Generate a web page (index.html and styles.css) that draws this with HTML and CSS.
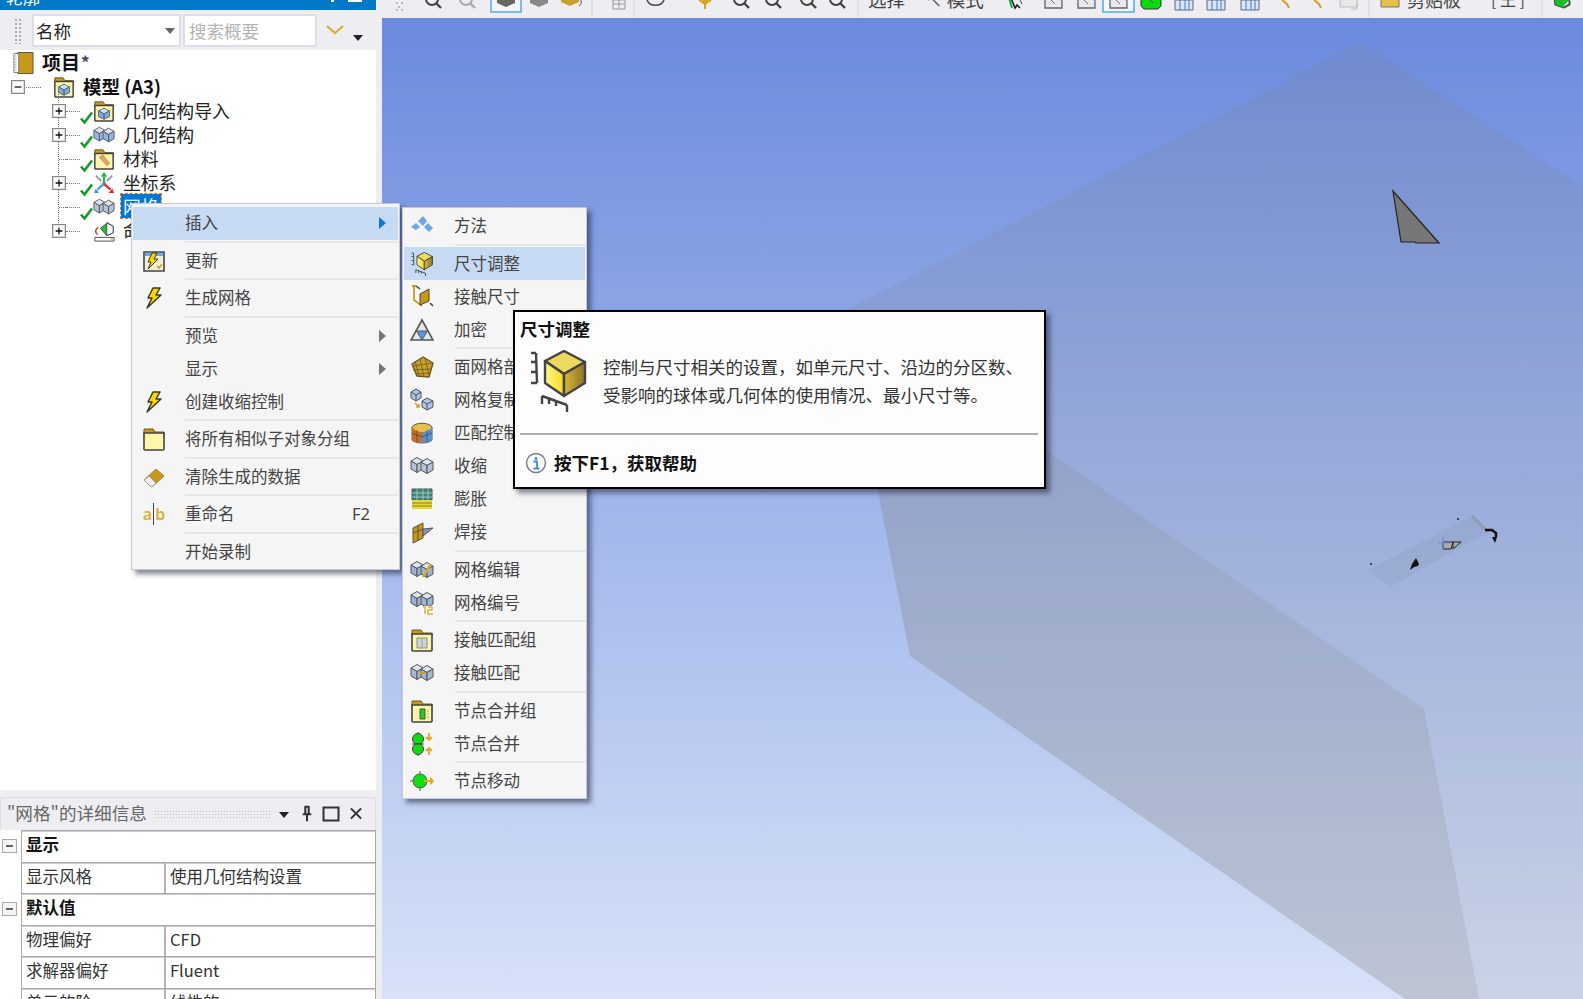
FILE: index.html
```html
<!DOCTYPE html>
<html lang="zh">
<head>
<meta charset="utf-8">
<title>Mechanical</title>
<link rel="stylesheet" href="styles.css">
</head>
<body>
<svg class="sprite" xmlns="http://www.w3.org/2000/svg">
  <defs>
    <linearGradient id="yl" x1="0" x2="1" y1="0" y2="0"><stop offset="0" stop-color="#fff48a"/><stop offset="1" stop-color="#f4dc20"/></linearGradient>
    <linearGradient id="gd" x1="0" x2="1" y1="0" y2="0"><stop offset="0" stop-color="#d8b83c"/><stop offset="1" stop-color="#8c7428"/></linearGradient>
    <symbol id="chk" viewBox="0 0 13 13"><path d="M1 7.500 4.500 11.500 12 1.500" fill="none" stroke="#159a2c" stroke-width="2.600"/></symbol>
    <symbol id="brick" viewBox="0 0 24 24"><g stroke="#555" stroke-width="1" stroke-linejoin="round"><path d="M1 7 7 3.500 13 7 7 10.500z" fill="#dbe4f0"/><path d="M1 7l6 3.500v8L1 15z" fill="currentColor"/><path d="M13 7l-6 3.500v8l6-3.500z" fill="currentColor"/><path d="M11 8l6-3.500L23 8l-6 3.500z" fill="#dbe4f0"/><path d="M11 8l6 3.500v8L11 16z" fill="currentColor"/><path d="M23 8l-6 3.500v8l6-3.500z" fill="currentColor"/></g></symbol>
    <symbol id="folder" viewBox="0 0 24 24"><path d="M2 2h9l2 3h9v4H2z" fill="#c8981a" stroke="#6a5a20"/><path d="M2 6h20v16a1 1 0 0 1-1 1H3a1 1 0 0 1-1-1z" fill="#fdf6a8" stroke="#444" stroke-width="1.600"/></symbol>
    <symbol id="foldercube" viewBox="0 0 24 24"><use href="#folder" width="24" height="24"/><path d="M6 12l6-3 6 3-6 3z" fill="#cfe0f5" stroke="#567"/><path d="M6 12l6 3v6l-6-3zM18 12l-6 3v6l6-3z" fill="#7ea8e0" stroke="#567"/></symbol>
    <symbol id="foldermat" viewBox="0 0 24 24"><use href="#folder" width="24" height="24"/><path d="M7 10l8 9 3-2-7-9z" fill="#e0a870" stroke="#a07850" stroke-width=".8"/></symbol>
    <symbol id="coord" viewBox="0 0 24 24"><circle cx="12" cy="13" r="2.500" fill="#999"/><path d="M12 12V3" stroke="#1ec03c" stroke-width="2.400"/><path d="M12 0l3.500 5h-7z" fill="#1ec03c"/><path d="M12 13l7 6" stroke="#e22" stroke-width="2.400"/><path d="M23 23l-6 0 4-5z" fill="#e22"/><path d="M12 13l-7 6" stroke="#4a9ae8" stroke-width="2.400"/><path d="M1 23l6 0-4-5z" fill="#4a9ae8"/><path d="M3 4l6 6M21 4l-6 6" stroke="#8a94a8" stroke-width="1.800"/></symbol>
    <symbol id="named" viewBox="0 0 24 24"><path d="M8 9l8-6 6 4v7l-7 3z" fill="#26c02c" stroke="#444"/><path d="M15 3l7 4v7l-7 3z" fill="#fff" stroke="#444"/><path d="M2 19h21v4H2z" fill="#fff" stroke="#444"/><path d="M6 8C2 10 2 14 5 16" fill="none" stroke="#e03020" stroke-width="1.600"/><path d="M19 20h3v2h-3z" fill="#e8c060"/></symbol>
    <symbol id="project" viewBox="0 0 22 24"><path d="M5 1h16v22H5z" fill="#c8981a" stroke="#554"/><path d="M1 2h5v20H1z" fill="#fff" stroke="#777"/><path d="M3 4v16" stroke="#999" stroke-dasharray="1.500 1.500"/></symbol>
    <symbol id="bolt" viewBox="0 0 24 24"><path d="M11 2 6 12h4L5 22 19 9h-5l4-7z" fill="#f7d800" stroke="#3a3a2a" stroke-width="1.500" stroke-linejoin="round"/></symbol>
    <symbol id="update" viewBox="0 0 24 24"><path d="M2 3h20v19H2z" fill="#f4f0d8" stroke="#444" stroke-width="1.600"/><path d="M3 4h18v3H3z" fill="#6aa8e8"/><path d="M10 4 6 13h3L6 20l10-10h-4l3-6z" fill="#f7d800" stroke="#3a3a2a"/><path d="M15 17l2 2 3-4" fill="none" stroke="#c8a030" stroke-width="1.500"/></symbol>
    <symbol id="eraser" viewBox="0 0 24 24"><path d="M2 15 14 4l8 7-12 11z" fill="#c8981a" stroke="#a88428"/><path d="M2 15l5 5 3 2 4-4-7-7z" fill="#eee" stroke="#999"/></symbol>
    <symbol id="method" viewBox="0 0 24 24"><g fill="#6aa8ea"><path d="M1 13l5-4 4 4-4 3zM8 7l5-5 4 5-4 5zM14 13l4-4 5 5-4 4z"/></g></symbol>
    <symbol id="sizing" viewBox="0 0 60 62"><path d="M3 3h5M8 3l1 30M3 12h5M3 22h6M3 33h6" fill="none" stroke="#444" stroke-width="2.400"/><path d="M14 46l25 9M14 46v8M21 49v5M28 51v5M39 55v7" fill="none" stroke="#444" stroke-width="2.400"/><path d="M17 11 36 1l21 11-21 12z" fill="#ecd95e" stroke="#444" stroke-width="2.400" stroke-linejoin="round"/><path d="M17 11l19 13v22l-19-13z" fill="url(#yl)" stroke="#444" stroke-width="2.400" stroke-linejoin="round"/><path d="M57 12 36 24v22l21-13z" fill="url(#gd)" stroke="#444" stroke-width="2.400" stroke-linejoin="round"/></symbol>
    <symbol id="contact" viewBox="0 0 24 24"><path d="M2 1h4M4 1v14l8 6" fill="none" stroke="#c8a020" stroke-width="1.800"/><path d="M10 9l9-5v12l-9 4z" fill="#c8981a" stroke="#444"/><path d="M6 1l4 3M20 18l3 3" stroke="#444" stroke-width="1.500"/></symbol>
    <symbol id="refine" viewBox="0 0 24 24"><path d="M12 2 23 22H1z" fill="#dfe6ef" stroke="#555" stroke-width="1.600"/><path d="M6.500 13h11L12 22z" fill="#5a94e0" stroke="#555"/></symbol>
    <symbol id="facemesh" viewBox="0 0 24 24"><path d="M2 9 13 2l10 6-4 14-12-1z" fill="#c8a028" stroke="#6a5a20" stroke-width="1.400"/><path d="M5 6l4 15M10 4l4 18M15 3l4 17M2 11l21-3M3 15l18-1M5 19l15-1" stroke="#6a5a20" stroke-width=".8" fill="none"/></symbol>
    <symbol id="meshcopy" viewBox="0 0 24 24"><g stroke="#555" fill="#a9c4e6"><path d="M1 4l5-3 5 3v6l-5 3-5-3z"/><path d="M12 13l5-3 6 3v6l-6 3-5-3z"/></g><path d="M1 4l5 3 5-3M6 7v6M12 13l5 3 6-3M17 16v6" fill="none" stroke="#555"/><path d="M5 15l4 4m0-3v3H6" fill="none" stroke="#e0a020" stroke-width="1.500"/></symbol>
    <symbol id="match" viewBox="0 0 24 24"><path d="M2 6C5 1 19 1 22 6v13c-3 4-17 4-20 0z" fill="#e8c048" stroke="#555"/><path d="M2 6c3 4 8 5 10 5V22c-4 0-8-1-10-3z" fill="#c87028"/><path d="M12 11c3 0 7-1 10-5v13c-2 2-6 3-10 3z" fill="#5a90d0"/><path d="M7 9v12M17 9v12M2 12l10 4 10-4" stroke="#444" stroke-width=".7" fill="none"/></symbol>
    <symbol id="inflate" viewBox="0 0 24 24"><path d="M2 2h20v11H2z" fill="#3a8a70" stroke="#456"/><path d="M2 6h20M2 10h20M7 2v11M13 2v11M18 2v11" stroke="#bcd" stroke-width=".8"/><path d="M2 13h20v9H2z" fill="#e8d838"/><path d="M2 16h20M2 19h20" stroke="#8a8020" stroke-width="1.200"/></symbol>
    <symbol id="weld" viewBox="0 0 24 24"><path d="M3 8l10-5v15L3 23z" fill="#c8981a" stroke="#554"/><path d="M8 6v15M3 13l10-4" stroke="#554"/><path d="M13 9l10-1-10 8z" fill="#8a94a8" stroke="#556"/></symbol>
    <symbol id="meshedit" viewBox="0 0 24 24"><use href="#brick" width="24" height="24" color="#9cb4d4"/><path d="M13 19l8-13" stroke="#d8a828" stroke-width="2.400"/></symbol>
    <symbol id="meshnum" viewBox="0 0 24 24"><use href="#brick" width="24" height="24" y="-3" color="#9cb4d4"/><path d="M11 15h13v9H11z" fill="#fff"/><path d="M13 16h2v7M18 16h4v3h-4v4h5" fill="none" stroke="#e0b030" stroke-width="1.500"/></symbol>
    <symbol id="cgroup" viewBox="0 0 24 24"><use href="#folder" width="24" height="24"/><path d="M7 10h10v10H7z" fill="#c8d4e4" stroke="#889"/><path d="M12 10v10" stroke="#c8a030"/></symbol>
    <symbol id="cmatch" viewBox="0 0 24 24"><use href="#brick" width="24" height="24" color="#a8b8cc"/><path d="M9 12h6" stroke="#c8a030" stroke-width="2"/></symbol>
    <symbol id="ngroup" viewBox="0 0 24 24"><use href="#folder" width="24" height="24"/><path d="M10 10h5v10h-5z" fill="#22cc22" stroke="#454"/><path d="M18 11v8" stroke="#c8a030" stroke-dasharray="2 1"/></symbol>
    <symbol id="nmerge" viewBox="0 0 24 24"><circle cx="8" cy="7" r="5.500" fill="#14d814" stroke="#444"/><circle cx="8" cy="17" r="5.500" fill="#14d814" stroke="#444"/><path d="M8 0v2M8 22v2M2 12h12" stroke="#444"/><path d="M19 1v6m-3-2 3 3 3-3M19 23v-6m-3 2 3-3 3 3" fill="none" stroke="#e0a820" stroke-width="1.800"/></symbol>
    <symbol id="nmove" viewBox="0 0 24 24"><circle cx="10" cy="12" r="7" fill="#10e010" stroke="#555"/><path d="M10 2v3M10 19v3M0 12h3" stroke="#555"/><path d="M14 12h9m-3-3 3 3-3 3" fill="none" stroke="#e0a820" stroke-width="1.800"/></symbol>
    <symbol id="plus" viewBox="0 0 14 14"><path d="M3 7h8M7 3v8" stroke="#111" stroke-width="1.500"/></symbol>
    <symbol id="minus" viewBox="0 0 14 14"><path d="M3 7h8" stroke="#111" stroke-width="1.500"/></symbol>
    <g id="mag"><circle cx="0" cy="0" r="6" fill="none" stroke="currentColor" stroke-width="2"/><path d="M4 4l5 5" stroke="currentColor" stroke-width="2.400"/></g>
    <g id="tcube"><path d="M-9 -3 0 -7 9 -3 9 4 0 8 -9 4z" fill="currentColor"/></g>
    <g id="tbox"><path d="M-8 -2h15l2 3v7H-8z" fill="#e8e8ee" stroke="#666" stroke-width="1.300"/><path d="M-2 0l4 4" stroke="#777"/></g>
    <g id="tgrid"><path d="M-9 0h18v10H-9z" fill="#dbe6f4" stroke="#667"/><path d="M-4 0v10M1 0v10M5 0v10" stroke="#3a7ad0"/></g>
  </defs>
</svg>

<div class="app">
  <aside class="left">
    <div class="titlebar">
      <span class="title-text">轮廓</span>
      <span class="title-btns"><i class="tb-pin"></i><i class="tb-box"></i></span>
    </div>
    <div class="searchbar">
      <span class="gripper"></span>
      <div class="combo"><span>名称</span><i class="tri"></i></div>
      <div class="search">搜索概要</div>
      <svg class="chev" viewBox="0 0 18 10"><path d="M1 1l8 7 8-7" fill="none" stroke="#d8ae30" stroke-width="2.200"/></svg>
      <i class="tri black"></i>
    </div>

    <div class="tree">
      <div class="row root"><svg class="ic-project"><use href="#project"/></svg><b class="rootname">项目</b><span class="star">*</span></div>
      <div class="row model">
        <span class="exp"><svg><use href="#minus"/></svg></span><span class="dots wide"></span>
        <svg class="ic-model"><use href="#foldercube"/></svg><b class="modelname">模型 (A3)</b>
      </div>
      <div class="children">
        <div class="row"><span class="exp"><svg><use href="#plus"/></svg></span><span class="dots"></span><svg class="chk"><use href="#chk"/></svg><svg class="ic"><use href="#foldercube"/></svg><span class="lbl">几何结构导入</span></div>
        <div class="row"><span class="exp"><svg><use href="#plus"/></svg></span><span class="dots"></span><svg class="chk"><use href="#chk"/></svg><svg class="ic blue"><use href="#brick"/></svg><span class="lbl">几何结构</span></div>
        <div class="row"><span class="exp none"></span><span class="dots"></span><svg class="chk"><use href="#chk"/></svg><svg class="ic"><use href="#foldermat"/></svg><span class="lbl">材料</span></div>
        <div class="row"><span class="exp"><svg><use href="#plus"/></svg></span><span class="dots"></span><svg class="chk"><use href="#chk"/></svg><svg class="ic"><use href="#coord"/></svg><span class="lbl">坐标系</span></div>
        <div class="row"><span class="exp none"></span><span class="dots"></span><svg class="chk"><use href="#chk"/></svg><svg class="ic grey"><use href="#brick"/></svg><span class="lbl selected">网格</span></div>
        <div class="row"><span class="exp"><svg><use href="#plus"/></svg></span><span class="dots"></span><span class="nochk"></span><svg class="ic"><use href="#named"/></svg><span class="lbl">命名选择</span></div>
      </div>
    </div>

    <div class="details">
      <div class="details-head">
        <span class="details-title">"网格"的详细信息</span>
        <span class="details-grip"></span>
        <i class="tri black"></i>
        <svg class="dbtn pin" viewBox="0 0 14 20"><path d="M4 2h6M5 2v9M9 2v9M2 11h10M7 11v8" fill="none" stroke="#333" stroke-width="2.400"/></svg>
        <svg class="dbtn wide" viewBox="0 0 18 16"><path d="M1.500 2h15v13h-15z" fill="none" stroke="#333" stroke-width="2"/></svg>
        <svg class="dbtn close" viewBox="0 0 14 14"><path d="M1 1l12 12M13 1 1 13" stroke="#333" stroke-width="2.400"/></svg>
      </div>
      <div class="dgroup">
        <span class="collapse"><svg><use href="#minus"/></svg></span>
        <div class="drow head">显示</div>
      </div>
      <div class="dgroup">
        <span class="gutter"></span>
        <div class="drow"><span class="k">显示风格</span><span class="v">使用几何结构设置</span></div>
      </div>
      <div class="dgroup">
        <span class="collapse"><svg><use href="#minus"/></svg></span>
        <div class="drow head">默认值</div>
      </div>
      <div class="dgroup">
        <span class="gutter"></span>
        <div class="drow"><span class="k">物理偏好</span><span class="v">CFD</span></div>
      </div>
      <div class="dgroup">
        <span class="gutter"></span>
        <div class="drow"><span class="k">求解器偏好</span><span class="v">Fluent</span></div>
      </div>
      <div class="dgroup">
        <span class="gutter"></span>
        <div class="drow"><span class="k">单元的阶</span><span class="v">线性的</span></div>
      </div>
    </div>
  </aside>

  <main class="right">
    <div class="toolbar">
      <svg class="strip-a" viewBox="0 0 476 18">
        <g fill="#aaa"><circle cx="15" cy="3" r="1"/><circle cx="20" cy="3" r="1"/><circle cx="17" cy="7" r="1"/><circle cx="15" cy="10" r="1"/><circle cx="20" cy="10" r="1"/></g>
        <use href="#mag" x="50" y="-1" color="#444"/>
        <use href="#mag" x="84" y="-1" color="#aaa"/>
        <path d="M109 -2h30v14h-30z" fill="#f2f6fb" stroke="#55aaee" stroke-width="1.500"/>
        <use href="#tcube" x="124" y="-1" color="#666"/>
        <use href="#tcube" x="157" y="-1" color="#888"/>
        <use href="#tcube" x="188" y="-2" color="#c8a028"/>
        <path d="M199 0a5 5 0 0 1-2 6" fill="none" stroke="#555"/>
        <path d="M210 0v17M252 0v17M476 0v17" stroke="#d0d0d8"/>
        <path d="M231 0h12v9h-12zM231 4h12M237 0v9" fill="none" stroke="#999"/>
        <path d="M265 0a9 8 0 0 0 17 0" fill="none" stroke="#444" stroke-width="1.500"/>
        <path d="M317 0l6 4 6-4M323 3v6" fill="none" stroke="#d8a020" stroke-width="2"/><circle cx="323" cy="0" r="3" fill="#d8a020"/>
        <use href="#mag" x="358" y="-1" color="#444"/>
        <use href="#mag" x="390" y="-1" color="#444"/>
        <use href="#mag" x="425" y="-1" color="#444"/>
        <use href="#mag" x="454" y="-1" color="#444"/>
      </svg>
      <span class="tb-text first">选择</span>
      <span class="tb-text arrow">↖ 模式</span>
      <svg class="strip-b" viewBox="0 0 395 18">
        <path d="M6 -2l4 10 2-3 3 3" fill="none" stroke="#222" stroke-width="1.600"/><path d="M4 -2l3 10" stroke="#12b030" stroke-width="2"/><path d="M15 0l2 4" stroke="#444"/>
        <use href="#tbox" x="48"/>
        <use href="#tbox" x="81"/>
        <path d="M98 -2h31v14H98z" fill="#f2f6fb" stroke="#55aaee" stroke-width="1.500"/>
        <use href="#tbox" x="113"/>
        <path d="M136 -2h20v8l-3 3h-14l-3-3z" fill="#10d810" stroke="#333"/><path d="M145 0l3 3" stroke="#063"/>
        <use href="#tgrid" x="179"/>
        <use href="#tgrid" x="211"/>
        <use href="#tgrid" x="245"/>
        <path d="M277 0l5 4 2 4" fill="none" stroke="#d8a020" stroke-width="2"/>
        <path d="M309 0l5 4 2 4" fill="none" stroke="#d8a020" stroke-width="2"/>
        <path d="M335 -2h17v9h-17z" fill="#e8e8ea" stroke="#bbb"/><path d="M352 3v6h-6" fill="none" stroke="#bbb"/>
        <path d="M364 0v17" stroke="#d0d0d8"/>
        <path d="M376 -2h18v9h-18z" fill="#e8c048" stroke="#777"/>
      </svg>
      <span class="tb-text clip">剪贴板</span>
      <span class="tb-text bracket">[ 王 ]</span>
      <svg class="strip-c" viewBox="0 0 40 18">
        <path d="M1 0v17" stroke="#d0d0d8"/>
        <path d="M13 -2h12l4 3v4l-6 3-9-3z" fill="#18c028" stroke="#444"/><path d="M21 8l7-4V0" fill="#fff" stroke="#444"/>
      </svg>
    </div>
    <div class="viewport">
      <svg class="scene" viewBox="0 0 1201 981">
        <path d="M979 24 1201 169V981H1097L1042 691 461 294z" fill="#808080" fill-opacity=".15"/>
        <path d="M461 294 1042 691 1097 981H1023L528 638z" fill="#808080" fill-opacity=".3"/>
        <path d="M1011 173 1057 225 1034 225 1033 224H1019z" fill="#777" stroke="#222" stroke-width="1.200"/>
        <path d="M1090 498 1106 514 1008 569 986 552z" fill="#7f8ca8" fill-opacity=".17"/>
        <path d="M1090 498 1106 514" stroke="#8f9cb8" stroke-width="3"/>
        <circle cx="1076" cy="501" r="1" fill="#222"/><circle cx="989" cy="546" r="1" fill="#222"/>
        <path d="M1034 540l3 6-1 2-4 1-4 3 2-6z" fill="#111"/>
        <path d="M1061 524h10l-2 7h-8zM1071 524h8l-8 7z" fill="#aaa" stroke="#222"/>
        <path d="M1056 525h12M1061 519v12" stroke="#6a8ae0"/>
        <path d="M1103 512h7l4 3v4" fill="none" stroke="#111" stroke-width="2.500"/><path d="M1110 519h5l-2 6z" fill="#111"/>
      </svg>
    </div>
  </main>
</div>

<div class="menu menu-main">
  <div class="item active"><span class="slot"></span><span class="txt">插入</span><i class="sub blue"></i></div>
  <div class="sep"></div>
  <div class="item"><svg class="slot"><use href="#update"/></svg><span class="txt">更新</span></div>
  <div class="sep"></div>
  <div class="item"><svg class="slot"><use href="#bolt"/></svg><span class="txt">生成网格</span></div>
  <div class="sep"></div>
  <div class="item"><span class="slot"></span><span class="txt">预览</span><i class="sub"></i></div>
  <div class="item"><span class="slot"></span><span class="txt">显示</span><i class="sub"></i></div>
  <div class="item"><svg class="slot"><use href="#bolt"/></svg><span class="txt">创建收缩控制</span></div>
  <div class="sep"></div>
  <div class="item"><svg class="slot"><use href="#folder"/></svg><span class="txt">将所有相似子对象分组</span></div>
  <div class="sep"></div>
  <div class="item"><svg class="slot"><use href="#eraser"/></svg><span class="txt">清除生成的数据</span></div>
  <div class="sep"></div>
  <div class="item"><span class="slot ab"><span class="ab-a">a</span><span class="ab-i"></span><span class="ab-b">b</span></span><span class="txt">重命名</span><span class="key">F2</span></div>
  <div class="sep"></div>
  <div class="item"><span class="slot"></span><span class="txt">开始录制</span></div>
</div>

<div class="menu menu-sub">
  <div class="item"><svg class="slot"><use href="#method"/></svg><span class="txt">方法</span></div>
  <div class="sep"></div>
  <div class="item active"><svg class="slot"><use href="#sizing"/></svg><span class="txt">尺寸调整</span></div>
  <div class="item"><svg class="slot"><use href="#contact"/></svg><span class="txt">接触尺寸</span></div>
  <div class="item"><svg class="slot"><use href="#refine"/></svg><span class="txt">加密</span></div>
  <div class="sep"></div>
  <div class="item"><svg class="slot"><use href="#facemesh"/></svg><span class="txt">面网格剖分</span></div>
  <div class="item"><svg class="slot"><use href="#meshcopy"/></svg><span class="txt">网格复制</span></div>
  <div class="item"><svg class="slot"><use href="#match"/></svg><span class="txt">匹配控制</span></div>
  <div class="item"><svg class="slot grey"><use href="#brick"/></svg><span class="txt">收缩</span></div>
  <div class="item"><svg class="slot"><use href="#inflate"/></svg><span class="txt">膨胀</span></div>
  <div class="item"><svg class="slot"><use href="#weld"/></svg><span class="txt">焊接</span></div>
  <div class="sep"></div>
  <div class="item"><svg class="slot"><use href="#meshedit"/></svg><span class="txt">网格编辑</span></div>
  <div class="item"><svg class="slot"><use href="#meshnum"/></svg><span class="txt">网格编号</span></div>
  <div class="sep"></div>
  <div class="item"><svg class="slot"><use href="#cgroup"/></svg><span class="txt">接触匹配组</span></div>
  <div class="item"><svg class="slot"><use href="#cmatch"/></svg><span class="txt">接触匹配</span></div>
  <div class="sep"></div>
  <div class="item"><svg class="slot"><use href="#ngroup"/></svg><span class="txt">节点合并组</span></div>
  <div class="item"><svg class="slot"><use href="#nmerge"/></svg><span class="txt">节点合并</span></div>
  <div class="sep"></div>
  <div class="item"><svg class="slot"><use href="#nmove"/></svg><span class="txt">节点移动</span></div>
</div>

<div class="tip">
  <div class="tip-title">尺寸调整</div>
  <div class="tip-body">
    <svg class="tip-icon"><use href="#sizing"/></svg>
    <p class="tip-text">控制与尺寸相关的设置，如单元尺寸、沿边的分区数、<br>受影响的球体或几何体的使用情况、最小尺寸等。</p>
  </div>
  <div class="tip-rule"></div>
  <div class="tip-foot">
    <svg class="tip-info" viewBox="0 0 22 22"><circle cx="11" cy="11" r="9.500" fill="#fff" stroke="#7a7f8a" stroke-width="1.500"/><circle cx="11" cy="6.500" r="1.500" fill="#3a8ae8"/><path d="M8.500 9.500H12V16M8.500 16.500h6" fill="none" stroke="#3a8ae8" stroke-width="1.800"/></svg>
    <b>按下F1，获取帮助</b>
  </div>
</div>
</body>
</html>
```

FILE: styles.css
```css
* { box-sizing: border-box; }
html, body { margin: 0; height: 999px; overflow: hidden; }
body {
  background: #eeeef2;
  color: #222;
  font-family: "Noto Sans CJK SC", "Noto Sans", sans-serif;
  font-size: 16.5px;
}
.sprite { display: block; width: 0; height: 0; }
.app { display: flex; height: 999px; }

/* left column */
.left { width: 376px; display: flex; flex-direction: column; flex: none; }
.titlebar {
  height: 10px; background: #0078c8; color: #fff;
  display: flex; justify-content: space-between; overflow: hidden;
  margin-bottom: 1px;
}
.title-text { font-size: 17px; line-height: 0; padding-left: 6px; margin-top: -3px; }
.title-btns { display: flex; gap: 14px; padding-right: 14px; }
.tb-pin { width: 3px; height: 2px; background: #fff; }
.tb-box { width: 14px; height: 2px; background: #fff; }

.searchbar { height: 39px; display: flex; align-items: center; flex: none; padding-left: 14px; }
.gripper {
  width: 8px; height: 26px;
  background: radial-gradient(circle, #aaa 1px, transparent 1.300px) 0 0 / 4px 4px;
}
.combo, .search {
  height: 33px; background: #fff; border: 2px solid #dedee8;
  display: flex; align-items: center; font-size: 17.500px;
}
.combo { width: 149px; margin-left: 10px; padding-left: 2px; justify-content: space-between; padding-right: 4px; }
.search { width: 134px; margin-left: 2px; padding-left: 4px; color: #b4b4b4; }
.tri { width: 0; height: 0; border: 5px solid transparent; border-top: 6px solid #666; border-bottom: 0; display: block; }
.tri.black { border-top-color: #222; }
.chev { width: 18px; height: 10px; margin-left: 9px; margin-top: -1px; }
.searchbar .tri.black { margin-left: 9px; margin-top: 14px; }

.tree { height: 740px; background: #fff; flex: none; padding-top: 1px; font-size: 17.800px; }
.row { height: 24px; display: flex; align-items: center; line-height: 24px; white-space: nowrap; }
.root { padding-left: 13px; }
.ic-project { width: 21px; height: 24px; }
.rootname { font-size: 19px; margin-left: 8px; margin-top: -2px; color: #111; }
.star { color: #446; font-weight: 700; margin-left: 1px; margin-top: -3px; font-size: 17px; }
.model { padding-left: 11px; }
.ic-model { width: 22px; height: 24px; margin-left: 12px; }
.modelname { font-size: 18.500px; margin-left: 8px; margin-top: -2px; color: #111; }

.children { position: relative; padding-top: 0; }
.children::before {
  content: ""; position: absolute; left: 58px; top: -12px; bottom: 12px;
  border-left: 1px dotted #777;
}
.children .row { padding-left: 52px; }
.exp {
  width: 14px; height: 14px; background: #fff; border: 1px solid #888;
  box-shadow: inset 0 0 0 1px #ddd; display: block; position: relative; z-index: 1; flex: none;
}
.exp svg { display: block; width: 12px; height: 12px; }
.exp.none { height: 0; border: 0; box-shadow: none; background: none; border-top: 1px dotted #777; margin-left: 7px; width: 7px; }
.dots { width: 14px; height: 0; border-top: 1px dotted #777; flex: none; }
.dots.wide { width: 15px; margin-left: 1px; }
.chk { width: 13px; height: 13px; align-self: flex-end; margin-bottom: -1px; flex: none; }
.nochk { width: 13px; flex: none; }
.ic { width: 22px; height: 24px; flex: none; }
.lbl { margin-left: 8px; margin-top: -2px; color: #222; }
.blue { color: #8fb6e6; }
.grey { color: #b4c4d8; }
.selected {
  background: #0078d7; color: #fff; outline: 1px dashed #e07a10;
  padding: 0 2px; margin-left: 6px; height: 24px; line-height: 24px;
}

/* details */
.details { margin-top: 7px; flex: 1; display: flex; flex-direction: column; overflow: hidden; }
.details-head {
  height: 33px; flex: none; border: 1px solid #dcdce6; border-bottom: 0;
  display: flex; align-items: center; padding: 0 0 4px 6px; font-size: 17.600px; color: #666;
}
.details-title { white-space: nowrap; }
.details-grip {
  width: 116px; height: 8px; margin-left: 7px; margin-top: 3px;
  background: radial-gradient(circle, #bbb 0.800px, transparent 1px) 0 0 / 3px 3px;
}
.details-head .tri.black { margin-left: 9px; margin-top: 5px; }
.dbtn { width: 12px; height: 17px; margin-top: 3px; }
.dbtn.pin { margin-left: 12px; }
.dbtn.wide { width: 18px; margin-left: 9px; }
.dbtn.close { margin-left: 10px; }
.dgroup { display: flex; height: 31.500px; flex: none; background: #fff; }
.gutter, .collapse { width: 21px; flex: none; display: block; }
.collapse { padding: 9px 3px 8px 2px; }
.collapse svg { display: block; width: 15px; height: 14px; background: #f4f4f4; border: 1px solid #aaa; }
.drow {
  flex: 1; display: flex; align-items: center;
  border: 1px solid #aaa; border-bottom: 0; padding-left: 4px; white-space: nowrap; color: #333;
  box-shadow: inset 0 1px 0 #ccc;
}
.drow.head { font-weight: 700; color: #111; padding-bottom: 4px; }
.k { width: 140px; flex: none; align-self: stretch; line-height: 26px; border-right: 2px solid #b4b4b4; }
.v { padding-left: 4px; line-height: 26px; align-self: flex-start; }

/* toolbar + viewport */
.right { flex: 1; margin-left: 6px; display: flex; flex-direction: column; min-width: 0; }
.toolbar { height: 18px; flex: none; display: flex; overflow: hidden; align-items: flex-start; color: #444; }
.strip-a { width: 476px; height: 18px; flex: none; overflow: visible; }
.strip-b { width: 395px; height: 18px; flex: none; margin-left: 26px; }
.strip-c { width: 40px; height: 18px; flex: none; margin-left: 10px; }
.tb-text { line-height: 0; height: 18px; white-space: nowrap; flex: none; margin-top: -1px; }
.tb-text.first { margin-left: 10px; width: 37px; font-size: 18.500px; }
.tb-text.arrow { margin-left: 19px; width: 55px; font-size: 18.500px; }
.tb-text.clip { margin-left: 7px; width: 56px; font-size: 18px; }
.tb-text.bracket { margin-left: 28px; width: 40px; font-size: 16px; }
.viewport {
  flex: 1; min-height: 0;
  background: linear-gradient(180deg, #6b8add 0%, #d7e2f8 100%);
}
.scene { display: block; width: 100%; height: 100%; }

/* context menus */
.menu {
  position: absolute; background: #f5f5f5; border: 1px solid #c6cad8;
  box-shadow: 4px 4px 5px rgba(30, 35, 60, .55); color: #444; z-index: 2;
}
.menu-main { left: 131px; top: 203px; width: 269px; height: 367px; padding: 2.500px 1px 0; }
.menu-sub { left: 402px; top: 207px; width: 185px; height: 592px; padding: 1.500px 0 0; z-index: 3; }
.item { height: 33px; display: flex; align-items: center; white-space: nowrap; padding-left: 9px; padding-right: 12px; }
.menu-sub .item { padding-left: 6px; margin: 0 1px; }
.item.active { background: #c6dbf3; }
.slot { width: 24px; height: 24px; flex: none; display: block; }
.txt { margin-left: 19px; margin-top: -2px; flex: 1; }
.menu-sub .txt { margin-left: 20px; }
.sep { height: 4.500px; padding-top: 1px; }
.sep::before { content: ""; display: block; height: 2px; background: #e6e6ea; }
.menu-main .sep { margin-left: 52px; }
.menu-sub .sep { margin-left: 52px; }
.sub { width: 0; height: 0; border: 6px solid transparent; border-left: 7px solid #777; border-right: 0; display: block; }
.sub.blue { border-left-color: #0a78d8; }
.key { margin-right: 16px; margin-top: -2px; font-family: "Noto Sans", sans-serif; }
.ab { display: flex; align-items: center; justify-content: center; color: #dbb03c; font: 600 16px "Noto Sans", sans-serif; }
.ab-i { width: 1px; height: 22px; background: #444; margin: 0 1px; }

/* tooltip */
.tip {
  position: absolute; left: 513px; top: 310px; width: 533px; height: 179px;
  background: #fdfdfd; border: 2px solid #000; z-index: 4;
  box-shadow: 4px 4px 5px rgba(30, 35, 60, .55);
  padding: 3px 5px 0; color: #222; font-size: 17.500px;
}
.tip-title { font-weight: 700; line-height: 28px; height: 28px; color: #111; }
.tip-body { display: flex; height: 65px; margin-top: 6px; }
.tip-icon { width: 60px; height: 62px; flex: none; margin-left: 8px; margin-top: 1px; }
.tip-text { margin: 0 0 0 15px; line-height: 28px; padding-top: 4px; white-space: nowrap; font-size: 17.500px; color: #333; }
.tip-rule { height: 2px; background: #b0b0b0; margin-top: 19px; margin-right: 1px; }
.tip-foot { display: flex; align-items: center; height: 55px; padding-left: 5px; font-size: 17.500px; color: #111; }
.tip-info { width: 22px; height: 22px; margin-right: 7px; flex: none; }
```
